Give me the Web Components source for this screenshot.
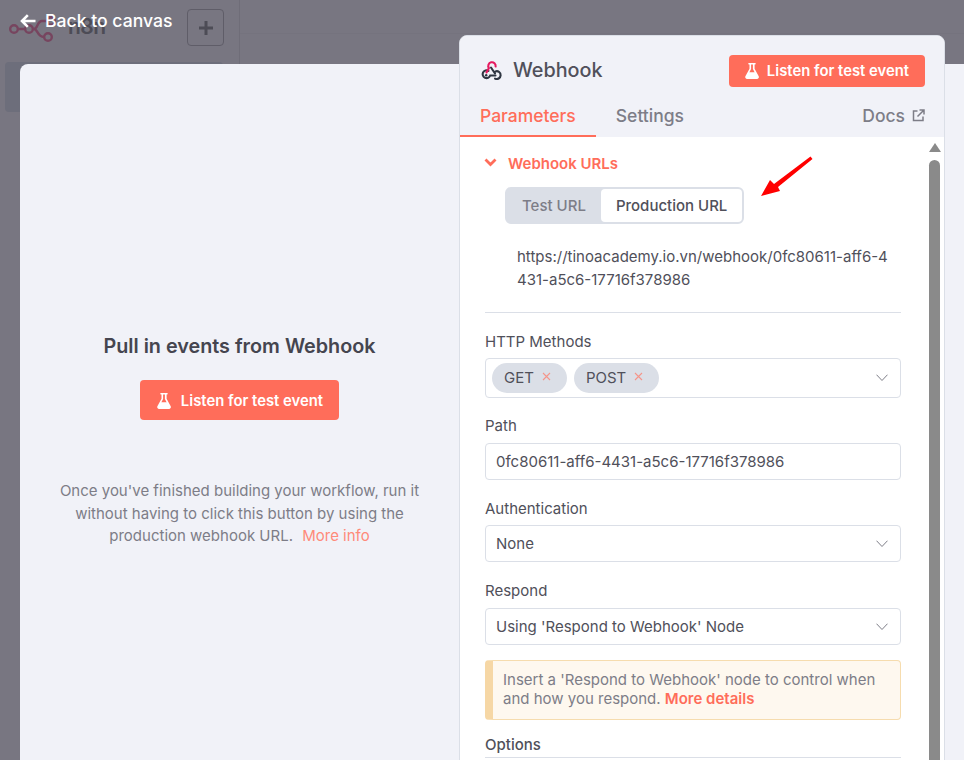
<!DOCTYPE html>
<html>
<head>
<meta charset="utf-8">
<style>
html, body { margin: 0; height: 760px; overflow: hidden; background: #787681; font-family: Inter, "Noto Sans", sans-serif; }
</style>
</head>
<body>
<app-backdrop></app-backdrop>
<ndv-modal>
    <test-empty-state slot="input"></test-empty-state>
    <node-panel slot="panel">
        <webhook-urls></webhook-urls>
        <param-divider></param-divider>
        <param-field label="HTTP Methods" top="20">
            <select-box tall>
                <method-tag>GET</method-tag>
                <method-tag>POST</method-tag>
            </select-box>
        </param-field>
        <param-field label="Path" top="19" gap="9">
            <text-box>0fc80611-aff6-4431-a5c6-17716f378986</text-box>
        </param-field>
        <param-field label="Authentication" top="20">
            <select-box>None</select-box>
        </param-field>
        <param-field label="Respond" top="20" gap="9">
            <select-box>Using 'Respond to Webhook' Node</select-box>
        </param-field>
        <warn-note>Insert a 'Respond to Webhook' node to control when and how you respond. <b>More details</b></warn-note>
        <options-head>Options</options-head>
    </node-panel>
</ndv-modal>
<script>
const FLASK = `<svg width="14" height="16" viewBox="0 0 14 16"><path fill="#fff" d="M4 0h6a.8.8 0 0 1 0 1.6h-.4v4.1l4.1 7.5c.6 1.2-.2 2.8-1.6 2.8H2c-1.4 0-2.2-1.6-1.6-2.8l4.1-7.5V1.6H4A.8.8 0 0 1 4 0Zm2.1 1.6v4.5L4.4 9.2h5.2L7.9 6.1V1.6Z"/></svg>`;

class AppBackdrop extends HTMLElement {
    constructor() {
        super();
        this.attachShadow({ mode: 'open' });
    }
    connectedCallback() {
        this.shadowRoot.innerHTML = `
            <style>
            :host { display: block; height: 64px; position: relative; }
            .side { width: 240px; height: 64px; border-right: 1px solid #6f6d78; display: flex; padding: 9px 0 0 9px; box-sizing: border-box; }
            .logo { margin-top: 6px; flex: none; overflow: visible; }
            .name { font-size: 21px; line-height: 26px; font-weight: 600; color: #4d4c56; margin: 5px 0 0 13px; width: 119px; letter-spacing: -0.5px; }
            .plus { width: 37px; height: 37px; box-sizing: border-box; border: 1px solid #5f5d68; border-radius: 4px; display: flex; align-items: center; justify-content: center; }
            .rule { position: absolute; left: 240px; right: 0; top: 33px; height: 1px; background: #75737e; }
            .item { position: absolute; left: 5px; top: 62px; width: 218px; height: 50px; background: #6d6e7b; border-radius: 4px; }
            </style>
            <div class="side">
                <svg class="logo" width="46" height="28" viewBox="0 0 46 28" fill="none" stroke="#77455f" stroke-width="2.400">
                    <circle cx="5" cy="14" r="3.800"/><circle cx="20" cy="14" r="3.800"/><circle cx="39" cy="22" r="3.800"/><circle cx="42" cy="6" r="3.800"/>
                    <path d="M8.800 14h7.400M23.800 14h1.200c4 0 3-8 8-8h5M25 14c4 0 3 8 10 8"/>
                </svg>
                <div class="name">n8n</div>
                <div class="plus"><svg width="16" height="16" viewBox="0 0 16 16"><path fill="#4d4c56" d="M6.500 1h3v5.500H15v3H9.500V15h-3V9.500H1v-3h5.500Z"/></svg></div>
            </div>
            <div class="rule"></div>
            <div class="item"></div>
        `;
    }
}
customElements.define('app-backdrop', AppBackdrop);

class NdvModal extends HTMLElement {
    constructor() {
        super();
        this.attachShadow({ mode: 'open' });
    }
    connectedCallback() {
        this.shadowRoot.innerHTML = `
            <style>
            :host { display: block; position: absolute; inset: 0; }
            .back { position: absolute; left: 20px; top: 11px; display: flex; align-items: center; gap: 8px; color: #fff; font-size: 17.600px; font-weight: 500; line-height: 20px; }
            .sheet { position: absolute; left: 20px; top: 64px; right: 0; bottom: 0; background: #f1f2f8; border-top-left-radius: 8px; }
            .input { width: 439px; height: 100%; }
            ::slotted([slot=panel]) { position: absolute; left: 459px; top: 35px; }
            </style>
            <div class="back">
                <svg width="17" height="14" viewBox="0 0 17 14"><path fill="none" stroke="#fff" stroke-width="2.600" d="M15.500 7H2M7.800 1.200 2 7l5.800 5.800"/></svg>
                <span>Back to canvas</span>
            </div>
            <div class="sheet"><div class="input"><slot name="input"></slot></div></div>
            <slot name="panel"></slot>
        `;
    }
}
customElements.define('ndv-modal', NdvModal);

class TestEmptyState extends HTMLElement {
    constructor() {
        super();
        this.attachShadow({ mode: 'open' });
    }
    connectedCallback() {
        this.shadowRoot.innerHTML = `
            <style>
            :host { display: flex; flex-direction: column; align-items: center; padding-top: 269px; text-align: center; }
            h2 { margin: 0; font-size: 19.800px; line-height: 26px; font-weight: 600; color: #45454f; white-space: nowrap; }
            .btn { margin-top: 21px; width: 199px; height: 40px; box-sizing: border-box; padding: 1px 0 0 1px; background: #ff6d5a; border-radius: 4px; color: #fff; font-size: 14.850px; font-weight: 600; display: flex; align-items: center; justify-content: center; gap: 10px; }
            p { margin: 60px 0 0; width: 380px; font-size: 15px; line-height: 22.500px; color: #7d7d87; }
            a { color: #ff8a7a; margin-left: 5px; }
            </style>
            <h2>Pull in events from Webhook</h2>
            <div class="btn">${FLASK}<span>Listen for test event</span></div>
            <p>Once you've finished building your workflow, run it without having to click this button by using the production webhook URL. <a>More info</a></p>
        `;
    }
}
customElements.define('test-empty-state', TestEmptyState);

class NodePanel extends HTMLElement {
    constructor() {
        super();
        this.attachShadow({ mode: 'open' });
    }
    connectedCallback() {
        this.shadowRoot.innerHTML = `
            <style>
            :host { display: block; width: 486px; height: 740px; box-sizing: border-box; border: 1px solid #dbdfe7; border-radius: 8px; background: #fff; overflow: hidden; }
            .head { background: #f1f2f8; height: 101px; box-sizing: border-box; position: relative; }
            .title { display: flex; align-items: center; padding: 19px 19px 0 20px; height: 32px; }
            .title .txt { font-size: 19.800px; line-height: 24px; color: #50505a; margin: -2px 0 0 11px; flex: 1; font-weight: 500; }
            .btn { width: 196px; height: 32px; background: #ff6d5a; border-radius: 4px; color: #fff; font-size: 14.850px; font-weight: 600; display: flex; align-items: center; justify-content: center; gap: 8px; }
            .tabs { display: flex; padding: 0 19px 0 0; position: absolute; left: 0; right: 0; bottom: 0; height: 33px; align-items: flex-start; font-size: 17.500px; font-weight: 500; color: #7d7d87; }
            .tab { height: 31px; box-sizing: content-box; padding: 0 20px; line-height: 24px; }
            .tab.on { color: #ff6d5a; border-bottom: 2px solid #ff6d5a; }
            .docs { margin: -1px 0 0 auto; display: flex; gap: 7px; align-items: center; height: 24px; }
            .body { display: flex; height: 638px; }
            .scroll { padding: 0 0 0 25px; min-width: 0; }
            .inner { width: 416px; }
            .bar { width: 11px; margin: 6px 4px 0 auto; display: flex; flex-direction: column; align-items: center; gap: 8px; }
            .up { width: 0; height: 0; border-left: 6.500px solid transparent; border-right: 6.500px solid transparent; border-bottom: 9px solid #8a8a8a; flex: none; }
            .thumb { width: 11px; flex: 1; background: #8a8a8a; border-radius: 6px 6px 0 0; }
            </style>
            <div class="head">
                <div class="title">
                    <svg width="22" height="22" viewBox="0 0 22 22" fill="none" stroke-width="2.100" stroke-linecap="round">
                        <path stroke="#2f3642" d="M8.500 10.800 A3.900 3.900 0 1 0 10.200 15.500H15.500"/>
                        <path stroke="#2f3642" d="M11 7.500 15 13.500M15.500 11.400A3.900 3.900 0 1 1 15 18.600"/>
                        <path stroke="#e6195f" d="M15.600 6.500A3.700 3.700 0 1 0 8.900 8L6.500 12.500"/>
                        <circle cx="6.200" cy="15.200" r="1.200" fill="#2f3642" stroke="none"/>
                    </svg>
                    <span class="txt">Webhook</span>
                    <div class="btn">${FLASK}<span>Listen for test event</span></div>
                </div>
                <div class="tabs">
                    <div class="tab on">Parameters</div>
                    <div class="tab">Settings</div>
                    <div class="docs">Docs
                        <svg width="13" height="13" viewBox="0 0 13 13" fill="none" stroke="#7d7d87" stroke-width="1.500"><path d="M5.500 2H1.500v9.500H11V7.500M7.500 1H12v4.500M12 1 5.500 7.500"/></svg>
                    </div>
                </div>
            </div>
            <div class="body">
                <div class="scroll"><div class="inner"><slot></slot></div></div>
                <div class="bar"><div class="up"></div><div class="thumb"></div></div>
            </div>
        `;
    }
}
customElements.define('node-panel', NodePanel);

class WebhookUrls extends HTMLElement {
    constructor() {
        super();
        this.attachShadow({ mode: 'open' });
    }
    connectedCallback() {
        this.shadowRoot.innerHTML = `
            <style>
            :host { display: block; position: relative; padding-top: 17px; }
            .hd { display: flex; align-items: center; color: #ff6d5a; font-size: 15px; font-weight: 600; line-height: 20px; }
            .hd svg { margin: -3px 11px 0 -1px; }
            .switch { margin: 13px 0 0 20px; display: inline-flex; background: #dbdfe7; border: 2px solid #dbdfe7; border-radius: 6px; font-size: 15px; font-weight: 500; height: 33px; }
            .switch div { padding: 0 15px 0 15px; line-height: 33px; color: #7d7d87; border-radius: 4px; }
            .switch .on { background: #fff; color: #50505a; }
            .url { margin: 21px 0 0 32px; width: 376px; font-size: 15px; line-height: 23px; color: #50505a; word-break: break-all; }
            .arrow { position: absolute; left: 275px; top: 18px; }
            </style>
            <div class="hd">
                <svg width="13" height="9" viewBox="0 0 13 9"><path fill="none" stroke="#ff6d5a" stroke-width="2.800" d="M1.500 1.500 6.500 6.500 11.500 1.500"/></svg>
                <span>Webhook URLs</span>
            </div>
            <div class="switch"><div>Test URL</div><div class="on">Production URL</div></div>
            <div class="url">https://tinoacademy.io.vn/webhook/0fc80611-aff6-4431-a5c6-17716f378986</div>
            <svg class="arrow" width="56" height="44" viewBox="0 0 56 44" fill="#f00"><path d="M1 41 10 25 14 29 50.500 1.500 52.500 4 18 32 20 36Z"/></svg>
        `;
    }
}
customElements.define('webhook-urls', WebhookUrls);

class ParamDivider extends HTMLElement {
    constructor() {
        super();
        this.attachShadow({ mode: 'open' });
        this.shadowRoot.innerHTML = `<style>:host { display: block; height: 1px; background: #dbdfe7; margin-top: 21px; }</style>`;
    }
}
customElements.define('param-divider', ParamDivider);

class ParamField extends HTMLElement {
    constructor() {
        super();
        this.attachShadow({ mode: 'open' });
    }
    connectedCallback() {
        const label = this.getAttribute('label') ?? '';
        const top = this.getAttribute('top') ?? '20';
        const gap = this.getAttribute('gap') ?? '8';
        this.shadowRoot.innerHTML = `
            <style>
            :host { display: block; margin-top: ${top}px; }
            label { display: block; font-size: 15px; line-height: 17px; color: #50505a; margin-bottom: ${gap}px; }
            </style>
            <label>${label}</label>
            <slot></slot>
        `;
    }
}
customElements.define('param-field', ParamField);

class SelectBox extends HTMLElement {
    constructor() {
        super();
        this.attachShadow({ mode: 'open' });
        this.shadowRoot.innerHTML = `
            <style>
            :host { display: flex; align-items: center; box-sizing: border-box; height: 37px; border: 1px solid #dbdfe7; border-radius: 4px; padding: 0 12px 0 10px; font-size: 15px; color: #50505a; background: #fff; }
            :host([tall]) { height: 40px; padding-left: 6px; }
            .val { flex: 1; display: flex; gap: 7px; }
            </style>
            <div class="val"><slot></slot></div>
            <svg width="12" height="8" viewBox="0 0 12 8"><path fill="none" stroke="#7d7d87" stroke-width="1" d="M.5.700 6 6.500 11.500.700"/></svg>
        `;
    }
}
customElements.define('select-box', SelectBox);

class MethodTag extends HTMLElement {
    constructor() {
        super();
        this.attachShadow({ mode: 'open' });
        this.shadowRoot.innerHTML = `
            <style>
            :host { display: inline-flex; align-items: center; height: 30px; margin-top: -1px; padding: 0 16px 0 12px; border-radius: 15px; background: #dbdfe7; font-size: 15px; color: #50505a; gap: 8px; }
            svg { margin-top: -3px; }
            </style>
            <slot></slot>
            <svg width="9" height="9" viewBox="0 0 9 9"><path fill="none" stroke="#f5958a" stroke-width="1.100" d="M1 1l7 7M8 1 1 8"/></svg>
        `;
    }
}
customElements.define('method-tag', MethodTag);

class TextBox extends HTMLElement {
    constructor() {
        super();
        this.attachShadow({ mode: 'open' });
        this.shadowRoot.innerHTML = `
            <style>
            :host { display: flex; align-items: center; box-sizing: border-box; height: 37px; border: 1px solid #dbdfe7; border-radius: 4px; padding: 0 10px; font-size: 15px; color: #50505a; background: #fff; }
            </style>
            <slot></slot>
        `;
    }
}
customElements.define('text-box', TextBox);

class WarnNote extends HTMLElement {
    constructor() {
        super();
        this.attachShadow({ mode: 'open' });
        this.shadowRoot.innerHTML = `
            <style>
            :host { display: block; box-sizing: border-box; margin-top: 15px; height: 60px; border: 1px solid #f6dcae; border-left: 8px solid #f6d7a5; border-radius: 4px; background: #fef8ef; padding: 9px 10px 0 10px; font-size: 15px; line-height: 19px; color: #7d7d87; }
            ::slotted(b) { color: #ff6d5a; font-weight: 600; }
            </style>
            <slot></slot>
        `;
    }
}
customElements.define('warn-note', WarnNote);

class OptionsHead extends HTMLElement {
    constructor() {
        super();
        this.attachShadow({ mode: 'open' });
        this.shadowRoot.innerHTML = `
            <style>
            :host { display: block; margin-top: 16px; font-size: 15px; line-height: 17px; font-weight: 500; color: #50505a; border-bottom: 1px solid #dbdfe7; padding-bottom: 4px; }
            </style>
            <slot></slot>
        `;
    }
}
customElements.define('options-head', OptionsHead);
</script>
</body>
</html>
